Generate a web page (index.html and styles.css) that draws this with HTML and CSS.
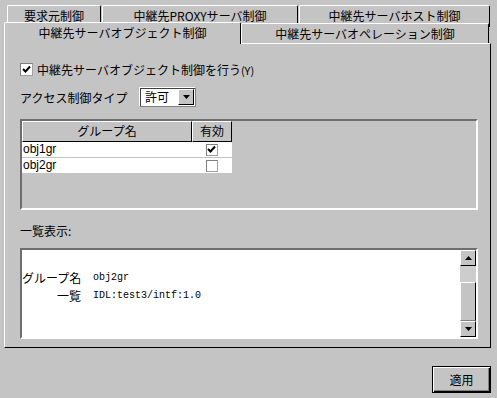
FILE: index.html
```html
<!DOCTYPE html>
<html lang="ja">
<head>
<meta charset="utf-8">
<title>中継先サーバオブジェクト制御</title>
<link rel="stylesheet" href="styles.css">
</head>
<body>
<div class="win">
  <div class="tabrow row1">
    <div class="tab t1">要求元制御</div>
    <div class="tab t2">中継先PROXYサーバ制御</div>
    <div class="tab t3">中継先サーバホスト制御</div>
  </div>
  <div class="tabrow row2">
    <div class="tab active t4">中継先サーバオブジェクト制御</div>
    <div class="tab t5">中継先サーバオペレーション制御</div>
  </div>
  <div class="panel">
    <div class="chk-row">
      <span class="chk"><svg width="9" height="9" viewBox="0 0 9 9"><path d="M1 4 L3.5 6.5 L8 1.5" fill="none" stroke="#000" stroke-width="2"/></svg></span>
      <span class="chk-label">中継先サーバオブジェクト制御を行う<span class="mn">(Y)</span></span>
    </div>
    <div class="access">
      <span class="access-label">アクセス制御タイプ</span>
      <div class="combo">
        <span class="combo-val">許可</span>
        <span class="combo-btn"><svg width="7" height="4" viewBox="0 0 7 4"><path d="M0 0 H7 L3.5 4 Z" fill="#000"/></svg></span>
      </div>
    </div>
    <div class="table-frame">
      <div class="thead">
        <div class="th c1">グループ名</div>
        <div class="th c2">有効</div>
      </div>
      <div class="tr">
        <div class="td c1">obj1gr</div>
        <div class="td c2"><span class="box"><svg width="9" height="9" viewBox="0 0 9 9"><path d="M1 4 L3.5 6.5 L8 1.5" fill="none" stroke="#000" stroke-width="2"/></svg></span></div>
      </div>
      <div class="tr">
        <div class="td c1">obj2gr</div>
        <div class="td c2"><span class="box"></span></div>
      </div>
    </div>
    <div class="list-label">一覧表示:</div>
    <div class="textarea">
      <div class="ta-content">
        <div class="ta-line"><span class="ta-key">グループ名</span><span class="ta-val">obj2gr</span></div>
        <div class="ta-line"><span class="ta-key">一覧</span><span class="ta-val">IDL:test3/intf:1.0</span></div>
      </div>
      <div class="scroll">
        <span class="sbtn"><svg width="7" height="4" viewBox="0 0 7 4"><path d="M0 4 H7 L3.5 0 Z" fill="#000"/></svg></span>
        <span class="track"></span>
        <span class="thumb"></span>
        <span class="sbtn"><svg width="7" height="4" viewBox="0 0 7 4"><path d="M0 0 H7 L3.5 4 Z" fill="#000"/></svg></span>
      </div>
    </div>
  </div>
  <div class="footer">
    <button class="apply">適用</button>
  </div>
</div>
</body>
</html>
```
FILE: styles.css
```css
html, body {
  margin: 0;
  padding: 0;
}
body {
  background: #c4c4c4;
  font-family: "Noto Sans CJK JP", "Liberation Sans", sans-serif;
  font-size: 12px;
  color: #000;
}
.win {
  width: 497px;
  height: 398px;
  box-sizing: border-box;
  padding-top: 5px;
  overflow: hidden;
}
.tabrow {
  display: flex;
}
.tab {
  box-sizing: border-box;
  background: #c4c4c4;
  border-top: 1px solid #fff;
  border-left: 1px solid #fff;
  border-right: 1px solid #000;
  border-radius: 2px 2px 0 0;
  text-align: center;
  white-space: nowrap;
  overflow: hidden;
}
.row1 {
  padding-left: 7px;
  height: 22px;
}
.row1 .tab {
  height: 22px;
  padding-top: 3px;
  line-height: 14px;
}
.t1 { width: 94px; }
.t2 { width: 196px; margin-left: 1px; }
.t3 { width: 191px; margin-left: 1px; }
.row2 {
  position: relative;
  z-index: 1;
  margin-top: -5px;
  padding-left: 4px;
  height: 22px;
  margin-bottom: -1px;
  align-items: flex-start;
}
.row2 .tab {
  line-height: 20px;
}
.t4 {
  width: 237px;
  height: 22px;
}
.t5 {
  width: 248px;
  height: 20px;
  margin-top: 1px;
  line-height: 19px;
}
.panel {
  margin-left: 4px;
  width: 487px;
  height: 305px;
  box-sizing: border-box;
  border-top: 1px solid #fff;
  border-left: 1px solid #fff;
  border-right: 1px solid #000;
  border-bottom: 1px solid #000;
  padding: 19px 0 0 15px;
}
.chk-row {
  display: flex;
  align-items: center;
  height: 13px;
}
.chk, .box {
  box-sizing: border-box;
  width: 13px;
  height: 13px;
  background: #fff;
  border-top: 1px solid #808080;
  border-left: 1px solid #808080;
  border-right: 1px solid #a0a0a0;
  border-bottom: 1px solid #a0a0a0;
  display: flex;
  align-items: center;
  justify-content: center;
}
.chk-label {
  margin-left: 4px;
  line-height: 14px;
  white-space: nowrap;
}
.mn {
  font-size: 11px;
}
.access {
  display: flex;
  align-items: center;
  margin-top: 11px;
  height: 20px;
}
.access-label {
  width: 119px;
  white-space: nowrap;
}
.combo {
  box-sizing: border-box;
  width: 57px;
  height: 20px;
  background: #fff;
  border-top: 1px solid #fff;
  border-left: 1px solid #fff;
  border-right: 1px solid #808080;
  border-bottom: 1px solid #808080;
  box-shadow: inset 1px 1px 0 #404040;
  display: flex;
  align-items: center;
  padding: 1px 1px 1px 5px;
}
.combo-val {
  flex: 1;
  line-height: 16px;
}
.combo-btn {
  box-sizing: border-box;
  width: 16px;
  height: 16px;
  background: #c4c4c4;
  border-top: 1px solid #fff;
  border-left: 1px solid #fff;
  border-right: 1px solid #000;
  border-bottom: 1px solid #000;
  display: flex;
  align-items: center;
  justify-content: center;
}
.table-frame {
  box-sizing: border-box;
  margin-top: 12px;
  width: 458px;
  height: 91px;
  border-top: 2px solid #6e6e6e;
  border-left: 2px solid #6e6e6e;
  border-right: 2px solid #fff;
  border-bottom: 2px solid #fff;
}
.thead, .tr {
  display: flex;
}
.th {
  box-sizing: border-box;
  height: 21px;
  border-top: 1px solid #fff;
  border-left: 1px solid #fff;
  border-right: 1px solid #000;
  border-bottom: 1px solid #000;
  text-align: center;
  line-height: 18px;
}
.c1 { width: 170px; }
.c2 { width: 40px; }
.tr {
  height: 16px;
  background: #fff;
  width: 210px;
  box-sizing: border-box;
  border-bottom: 1px solid #c4c4c4;
}
.td {
  box-sizing: border-box;
  height: 15px;
  line-height: 15px;
}
.td.c1 {
  font-family: "Liberation Sans", sans-serif;
  font-size: 12px;
  padding-left: 1px;
}
.td.c2 {
  display: flex;
  align-items: center;
  justify-content: center;
  padding-right: 1px;
}
.box {
  width: 12px;
  height: 12px;
}
.list-label {
  margin-top: 13px;
  line-height: 16px;
  height: 16px;
}
.textarea {
  box-sizing: border-box;
  margin-top: 9px;
  width: 458px;
  height: 91px;
  display: flex;
  background: #fff;
  border-top: 2px solid #6e6e6e;
  border-left: 2px solid #6e6e6e;
  border-right: 2px solid #fff;
  border-bottom: 2px solid #fff;
}
.ta-content {
  flex: 1;
  padding-top: 19px;
}
.ta-line {
  display: flex;
  height: 18px;
  line-height: 18px;
}
.ta-key {
  width: 59px;
  text-align: right;
  white-space: nowrap;
}
.ta-val {
  margin-left: 12px;
  font-family: "Liberation Mono", monospace;
  font-size: 10px;
}
.scroll {
  width: 16px;
  display: flex;
  flex-direction: column;
  background: #c4c4c4;
}
.sbtn {
  box-sizing: border-box;
  height: 16px;
  border-top: 1px solid #fff;
  border-left: 1px solid #fff;
  border-right: 1px solid #000;
  border-bottom: 1px solid #000;
  display: flex;
  align-items: center;
  justify-content: center;
}
.track {
  height: 16px;
  background: #cdcdcd;
}
.thumb {
  box-sizing: border-box;
  height: 39px;
  border-top: 1px solid #fff;
  border-left: 1px solid #fff;
  border-right: 1px solid #000;
  border-bottom: 1px solid #808080;
}
.footer {
  display: flex;
  justify-content: flex-end;
  padding: 18px 6px 0 0;
}
.apply {
  box-sizing: border-box;
  width: 59px;
  height: 27px;
  margin: 0;
  padding: 0;
  background: #c4c4c4;
  border: 1px solid #000;
  box-shadow: inset 1px 1px 0 #fff, inset -1px -1px 0 #000, inset -2px -2px 0 #808080;
  font-family: "Noto Sans CJK JP", sans-serif;
  font-size: 12px;
  color: #000;
  line-height: 23px;
}
```
